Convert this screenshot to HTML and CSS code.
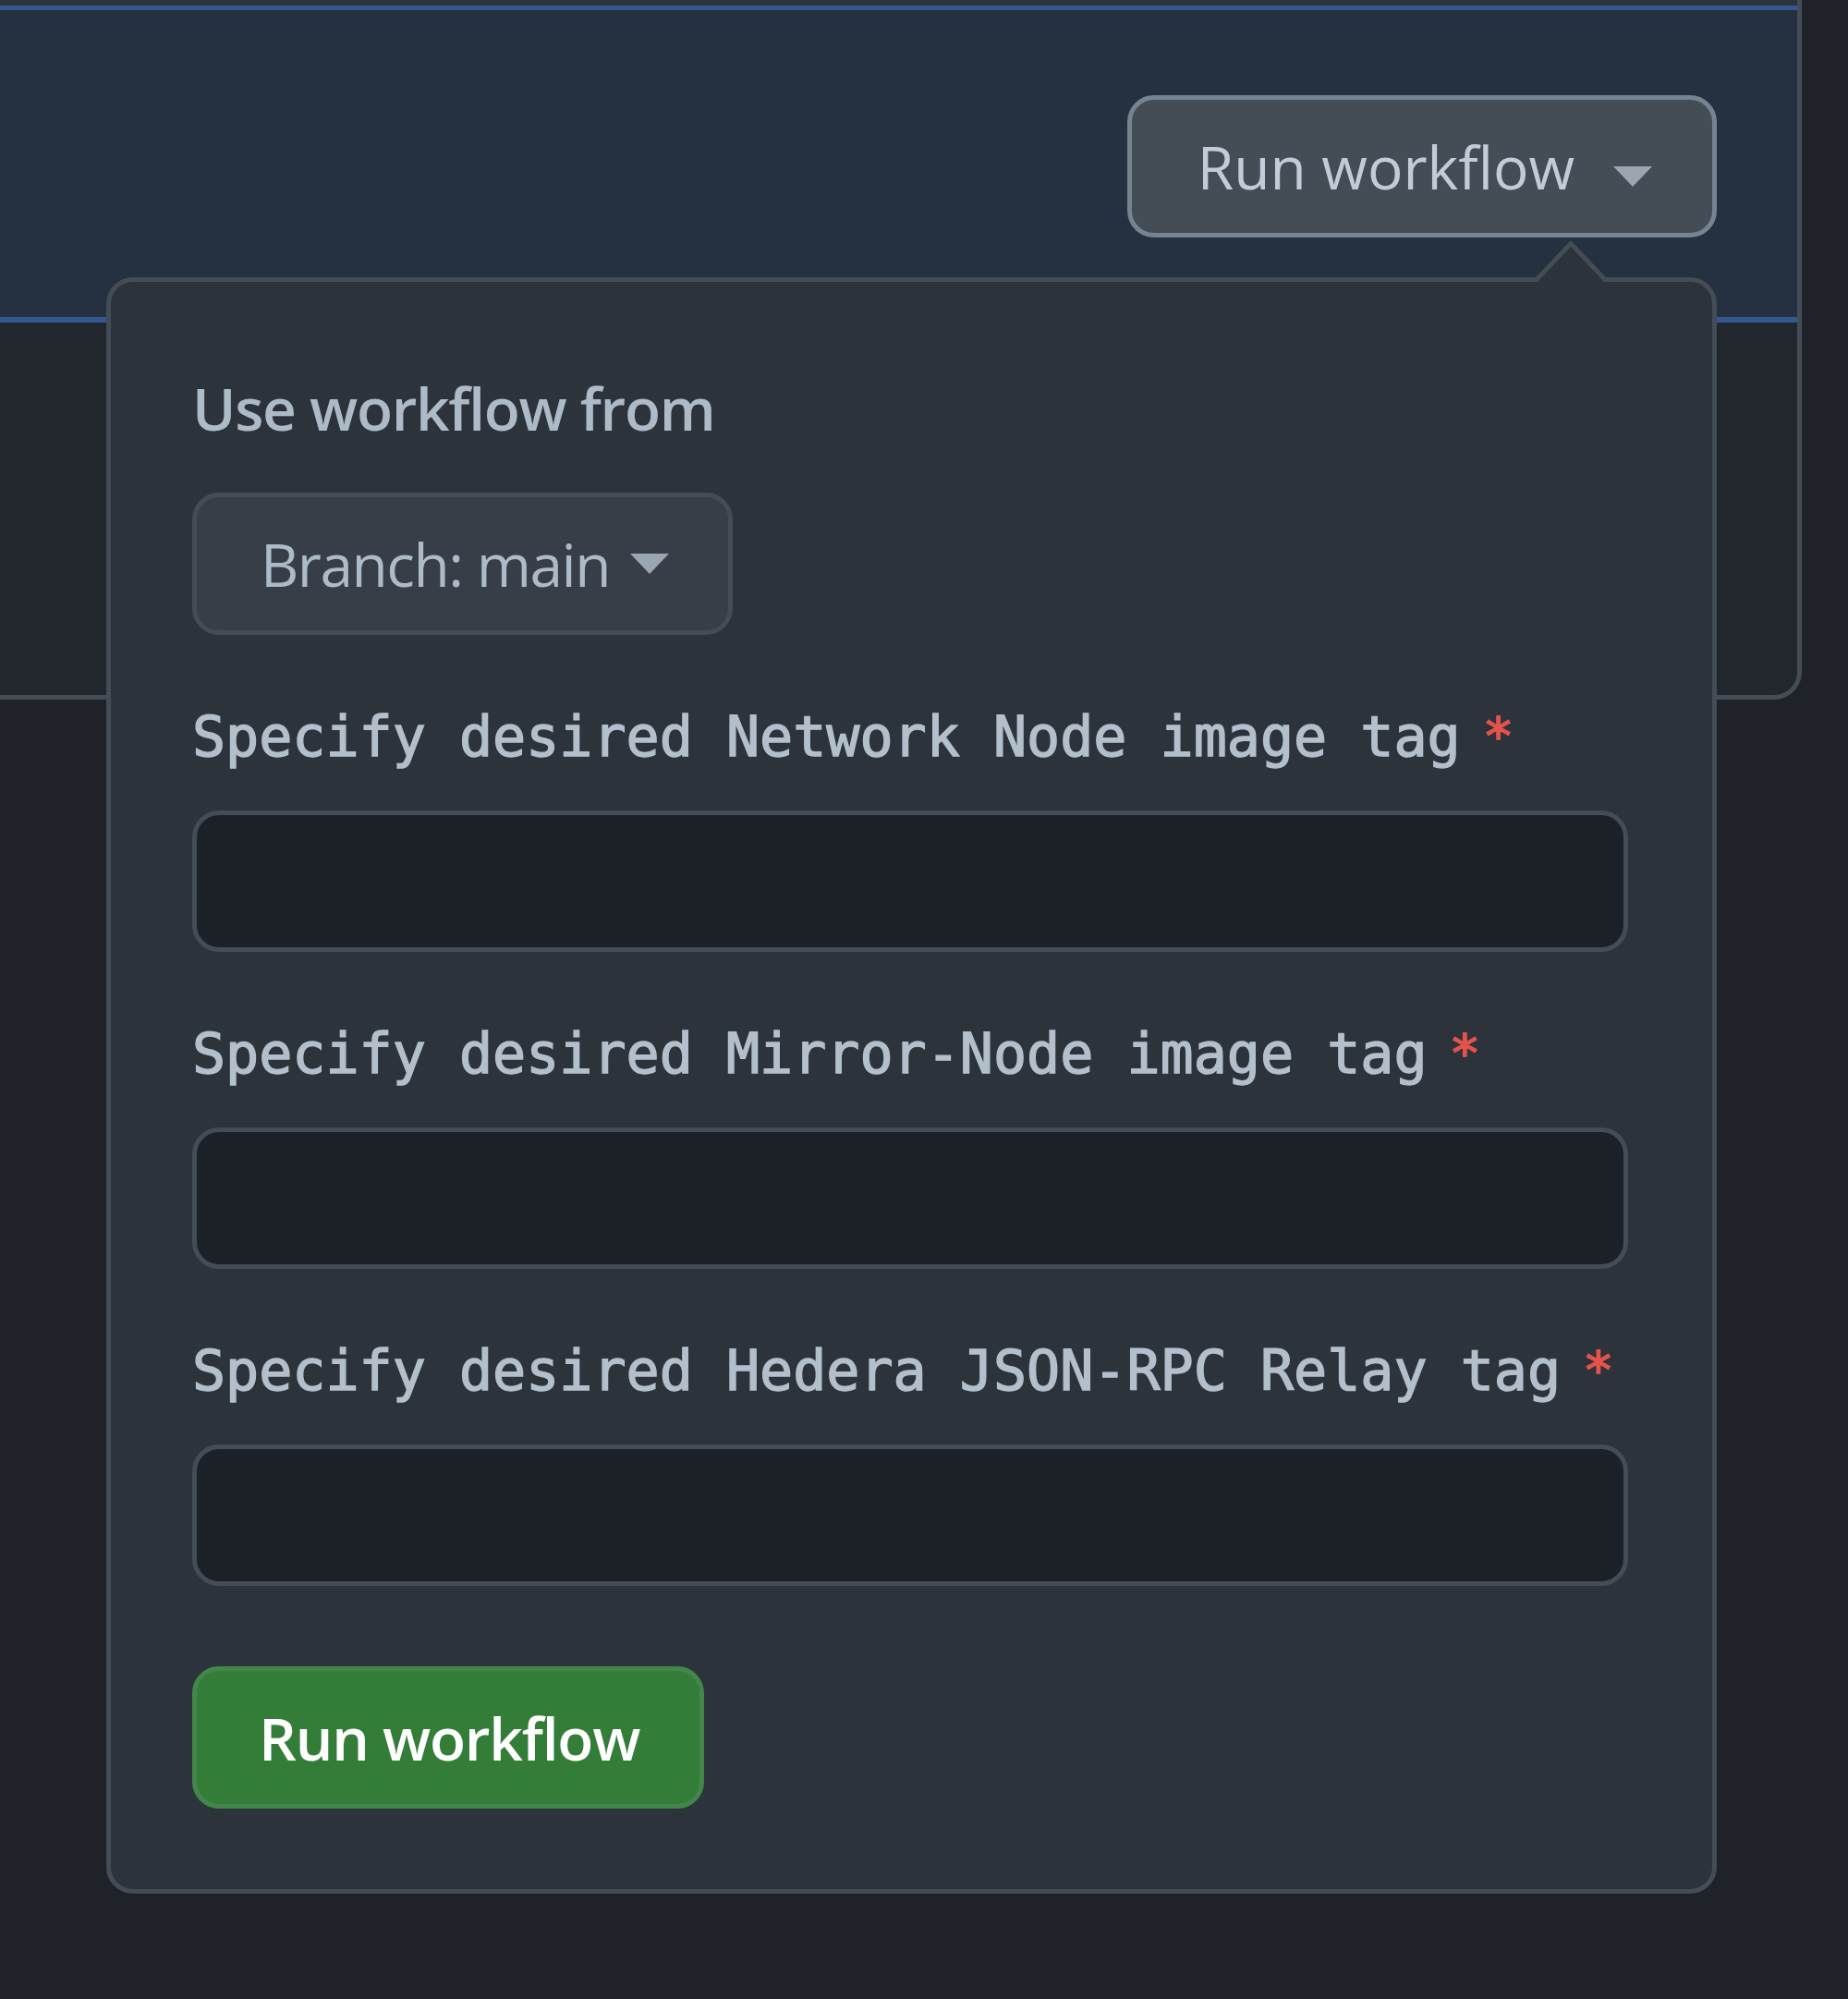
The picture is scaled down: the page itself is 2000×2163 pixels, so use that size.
FILE: index.html
```html
<!DOCTYPE html>
<html lang="en">
<head>
<meta charset="utf-8">
<title>Run workflow</title>
<link rel="stylesheet" href="styles.css">
</head>
<body>
<div class="box">
  <div class="box-top"></div>
  <div class="dispatch-row">
    <div class="dispatch-menu">
      <button class="btn btn-open" type="button">Run workflow<span class="caret caret-low"></span></button>
      <div class="popover">
        <div class="popover-title">Use workflow from</div>
        <button class="btn btn-branch" type="button">Branch: main<span class="caret caret-tight"></span></button>
        <div class="fields">
          <div class="field">
            <label class="field-label">Specify desired Network Node image tag<span class="req">*</span></label>
            <input class="field-input" type="text">
          </div>
          <div class="field">
            <label class="field-label">Specify desired Mirror-Node image tag<span class="req">*</span></label>
            <input class="field-input" type="text">
          </div>
          <div class="field">
            <label class="field-label">Specify desired Hedera JSON-RPC Relay tag<span class="req">*</span></label>
            <input class="field-input" type="text">
          </div>
        </div>
        <button class="btn btn-primary" type="button">Run workflow</button>
      </div>
    </div>
  </div>
  <div class="box-rest"></div>
</div>
</body>
</html>
```
FILE: styles.css
```css
* { box-sizing: border-box; }

html, body {
  margin: 0;
  padding: 0;
}

body {
  width: 2000px;
  height: 2163px;
  overflow: hidden;
  background: #1f2329;
  color: #adbac7;
  font-family: "Open Sans", "Noto Sans", sans-serif;
}

.box {
  width: 1960px;
  margin-left: -10px;
  height: 757px;
  background: #22272e;
  border-right: 5px solid #444c56;
  border-bottom: 5px solid #444c56;
  border-radius: 0 0 30px 0;
}

.box-top {
  height: 6px;
  background: #2d333b;
}

.dispatch-row {
  height: 343px;
  background: #253040;
  border-top: 5px solid #335791;
  border-bottom: 6px solid #335791;
  display: flex;
  justify-content: flex-end;
  align-items: flex-start;
  padding-top: 92px;
  padding-right: 87px;
}

.box-rest {
  height: 403px;
}

.dispatch-menu {
  position: relative;
}

.btn {
  display: inline-flex;
  align-items: center;
  height: 154px;
  border-radius: 29px;
  border: 5px solid #444c56;
  font-family: inherit;
  font-size: 64px;
  font-weight: 400;
  line-height: normal;
  color: #adbac7;
  background: #373e47;
  white-space: nowrap;
  cursor: pointer;
}

.btn-open {
  background: #444c56;
  border-color: #768390;
  padding: 0 65px 0 71px;
  color: #c0ccd8;
}

.caret {
  display: inline-block;
  width: 0;
  height: 0;
  border-top: 22px solid #9aa6b2;
  border-left: 21px solid transparent;
  border-right: 21px solid transparent;
}

.caret-low {
  margin-left: 42px;
  margin-top: 22px;
}

.caret-tight {
  margin-left: 22px;
}

.popover {
  position: absolute;
  top: calc(100% + 43px);
  right: 0;
  width: 1743px;
  background: #2d333b;
  border: 5px solid #444c56;
  border-radius: 29px;
  padding: 87px 91px 87px 88px;
}

.popover::before,
.popover::after {
  content: "";
  position: absolute;
  right: 115px;
  width: 0;
  height: 0;
  border-left: 38px solid transparent;
  border-right: 38px solid transparent;
  border-bottom: 40px solid #444c56;
}

.popover::before {
  top: -45px;
}

.popover::after {
  top: -38px;
  border-bottom-color: #2d333b;
}

.popover-title {
  font-size: 64px;
  font-weight: 600;
  letter-spacing: -1.3px;
  line-height: 100px;
  margin-bottom: 41px;
}

.btn-branch {
  padding: 0 64px 0 69px;
  letter-spacing: -1.5px;
}

.fields {
  display: flex;
  flex-direction: column;
  gap: 70px;
  margin-top: 70px;
  margin-bottom: 87px;
}

.field {
  display: flex;
  flex-direction: column;
  gap: 40px;
}

.field-label {
  font-family: "DejaVu Sans Mono", monospace;
  font-size: 60px;
  font-weight: 400;
  line-height: 80px;
  color: #b3c0cc;
  -webkit-text-stroke: 1.4px #b3c0cc;
}

.req {
  display: inline-block;
  margin-left: 24px;
  color: #e5534b;
  -webkit-text-stroke: 1.6px #e5534b;
  font-size: 56px;
  vertical-align: 2px;
}

.field-input {
  display: block;
  width: 100%;
  height: 153px;
  background: #1c2128;
  border: 5px solid #444c56;
  border-radius: 29px;
  margin: 0;
  padding: 0 40px;
  font-size: 60px;
  color: #adbac7;
  outline: none;
}

.btn-primary {
  background: #347d39;
  border-color: #43864a;
  color: #ffffff;
  padding: 0 65px 0 67px;
  font-weight: 600;
  letter-spacing: -1.2px;
}
```
